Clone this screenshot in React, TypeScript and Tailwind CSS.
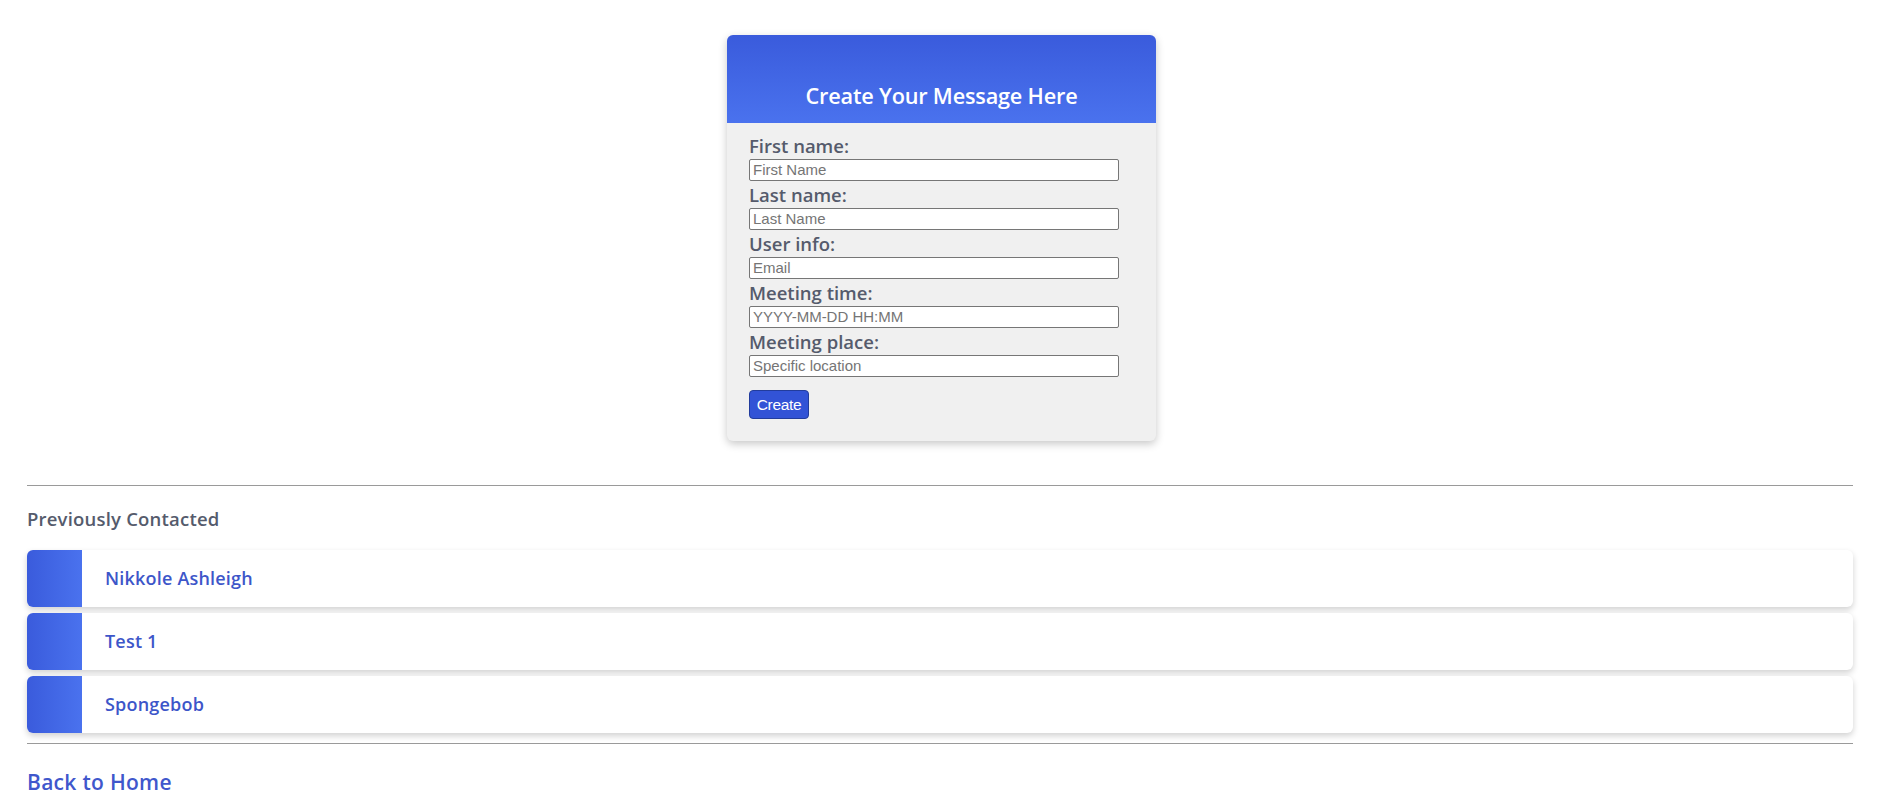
import React from 'react';

const fields = [
  { label: 'First name:', placeholder: 'First Name' },
  { label: 'Last name:', placeholder: 'Last Name' },
  { label: 'User info:', placeholder: 'Email' },
  { label: 'Meeting time:', placeholder: 'YYYY-MM-DD HH:MM' },
  { label: 'Meeting place:', placeholder: 'Specific location' },
];

const contacts = ['Nikkole Ashleigh', 'Test 1', 'Spongebob'];

export default function App() {
  return (
    <div className="min-h-screen bg-white font-['Open_Sans',sans-serif]">
      {/* Message form card */}
      <div className="flex justify-center pt-[35px]">
        <div className="w-[429px] overflow-hidden rounded-[6px] bg-[#f0f0f0] shadow-[0_3px_8px_rgba(0,0,0,0.22)]">
          <div className="flex h-[88px] items-end justify-center bg-gradient-to-b from-[#3a5bdc] to-[#4a72ee] pb-[10px]">
            <h2 className="text-[21.7px] font-semibold tracking-[-0.2px] text-white">Create Your Message Here</h2>
          </div>
          <form className="px-[22px] pb-[22px] pt-[9px]" onSubmit={e => e.preventDefault()}>
            {fields.map(f => (
              <div key={f.label}>
                <label className="block h-[27px] text-[18.5px] font-semibold leading-[27px] text-[#555b6c]">
                  {f.label}
                </label>
                <input
                  type="text"
                  placeholder={f.placeholder}
                  className="block h-[22px] w-[370px] rounded-[2px] border border-[#767676] bg-white px-[3px] font-['Liberation_Sans',Arial,sans-serif] text-[15px] text-[#333] placeholder:text-[#757575] focus:outline-none"
                />
              </div>
            ))}
            <button
              type="submit"
              className="mt-[13px] h-[29px] w-[60px] rounded-[4px] border border-[#223c9c] bg-[#3253d6] font-['Liberation_Sans',Arial,sans-serif] text-[15.5px] tracking-[-0.3px] text-white"
            >
              Create
            </button>
          </form>
        </div>
      </div>

      {/* Previously contacted list */}
      <div className="mx-[27px] mt-[44px] w-[1826px]">
        <hr className="border-0 border-t border-[#9a9a9a]" />
        <h3 className="mt-[19px] text-[18.5px] font-semibold tracking-[0.2px] text-[#555b6c]">Previously Contacted</h3>
        <div className="mt-[17px] flex flex-col gap-[6px]">
          {contacts.map(name => (
            <div
              key={name}
              className="flex h-[57px] items-center rounded-[6px] bg-white shadow-[0_3px_6px_rgba(0,0,0,0.18)]"
            >
              <div className="h-full w-[55px] rounded-l-[6px] bg-gradient-to-r from-[#3a5bdc] to-[#4a72ee]" />
              <span className="ml-[23px] text-[18px] font-semibold tracking-[0.2px] text-[#3d56c9]">{name}</span>
            </div>
          ))}
        </div>
        <hr className="mt-[10px] border-0 border-t border-[#9a9a9a]" />
        <a href="#" className="mt-[23px] inline-block text-[21px] font-semibold tracking-[0.3px] text-[#4057cc]">
          Back to Home
        </a>
      </div>
    </div>
  );
}
